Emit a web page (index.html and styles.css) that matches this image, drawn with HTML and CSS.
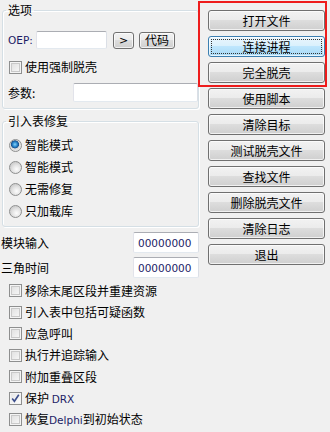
FILE: index.html
```html
<!DOCTYPE html>
<html>
<head>
<meta charset="utf-8">
<link rel="stylesheet" href="styles.css">
</head>
<body>
<div class="window">
  <div class="left">
    <fieldset class="group g1">
      <legend>选项</legend>
      <div class="row r-oep">
        <span class="latin lbl-oep">OEP:</span>
        <span class="edit e-oep"></span>
        <span class="btn b-arrow">&gt;</span>
        <span class="btn b-code">代码</span>
      </div>
      <div class="row r-force"><span class="cb"></span><span class="ctext">使用强制脱壳</span></div>
      <div class="row r-param">
        <span class="lbl-param">参数:</span>
        <span class="edit e-param"></span>
      </div>
    </fieldset>
    <fieldset class="group g2">
      <legend>引入表修复</legend>
      <div class="radio-row"><span class="rb on"></span><span class="ctext">智能模式</span></div>
      <div class="radio-row"><span class="rb"></span><span class="ctext">智能模式</span></div>
      <div class="radio-row"><span class="rb"></span><span class="ctext">无需修复</span></div>
      <div class="radio-row"><span class="rb"></span><span class="ctext">只加载库</span></div>
    </fieldset>
    <div class="val-row"><span class="vlabel">模块输入</span><span class="edit e-val latin">00000000</span></div>
    <div class="val-row"><span class="vlabel">三角时间</span><span class="edit e-val latin">00000000</span></div>
    <div class="checks">
      <div class="check-row"><span class="cb"></span><span class="ctext">移除末尾区段并重建资源</span></div>
      <div class="check-row"><span class="cb"></span><span class="ctext">引入表中包括可疑函数</span></div>
      <div class="check-row"><span class="cb"></span><span class="ctext">应急呼叫</span></div>
      <div class="check-row"><span class="cb"></span><span class="ctext">执行并追踪输入</span></div>
      <div class="check-row"><span class="cb"></span><span class="ctext">附加重叠区段</span></div>
      <div class="check-row"><span class="cb checked"><svg viewBox="0 0 11 11" width="11" height="11"><path d="M2.2 5.6 L4.4 8.3 L8.8 1.8" fill="none" stroke="#3d4f8c" stroke-width="1.6"/></svg></span><span class="ctext">保护 <span class="latin">DRX</span></span></div>
      <div class="check-row"><span class="cb"></span><span class="ctext">恢复<span class="latin">Delphi</span>到初始状态</span></div>
    </div>
  </div>
  <div class="right">
    <div class="btn wide">打开文件</div>
    <div class="btn wide focus"><span class="focus-rect">连接进程</span></div>
    <div class="btn wide">完全脱壳</div>
    <div class="btn wide">使用脚本</div>
    <div class="btn wide">清除目标</div>
    <div class="btn wide">测试脱壳文件</div>
    <div class="btn wide">查找文件</div>
    <div class="btn wide">删除脱壳文件</div>
    <div class="btn wide">清除日志</div>
    <div class="btn wide">退出</div>
  </div>
  <div class="redbox"></div>
</div>
</body>
</html>
```
FILE: styles.css
```css
* { box-sizing: border-box; }
html, body { margin: 0; padding: 0; }
body {
  width: 330px;
  height: 432px;
  background: #f0f0f0;
  font-family: "Noto Sans CJK SC", "DejaVu Sans", sans-serif;
  font-size: 12px;
  color: #000;
  overflow: hidden;
}
.window {
  position: relative;
  display: flex;
  width: 330px;
  height: 432px;
}
.left {
  width: 199px;
  display: flex;
  flex-direction: column;
}
.latin {
  font-family: "DejaVu Sans", "Liberation Sans", sans-serif;
  font-size: 10.5px;
  color: #1c1c66;
}
.group {
  margin: 0 0 0 2px;
  width: 197px;
  border: 1px solid #d5dfe5;
  border-radius: 3px;
  box-shadow: inset 1px 1px 0 #fff, 1px 1px 0 #fff;
  padding: 0;
  min-width: 0;
}
.group legend {
  margin-left: 3px;
  padding: 0 2px;
  height: 14px;
  line-height: 14px;
  font-size: 12px;
}
.g1 { margin-top: 3px; padding: 14px 0 6px 0; }
.g2 { margin-top: 5px; padding: 6px 0 4px 0; }

.row { display: flex; align-items: center; }
.r-oep { height: 18px; padding-left: 5px; }
.lbl-oep { width: 28px; }
.edit {
  display: flex;
  align-items: center;
  background: #fff;
  border: 1px solid;
  border-color: #abadb3 #dbdfe6 #e3e9ef #e2e3ea;
  border-radius: 2px;
}
.e-oep { width: 71px; height: 18px; }
.btn {
  display: flex;
  align-items: center;
  justify-content: center;
  border: 1px solid #707070;
  border-radius: 3px;
  background: linear-gradient(#f2f2f2 0%, #ebebeb 49%, #dddddd 50%, #cfcfcf 100%);
  box-shadow: inset 0 0 0 1px rgba(255,255,255,0.7);
  line-height: 1;
}
.b-arrow { width: 21px; height: 17px; margin-left: 6px; font-family: "DejaVu Sans", sans-serif; font-size: 11px; }
.b-code { width: 36px; height: 17px; margin-left: 5px; }
.r-force { height: 18px; margin-top: 9px; padding-left: 6px; }
.r-param { height: 19px; margin-top: 7px; padding-left: 5px; }
.lbl-param { width: 65px; }
.e-param { width: 125px; height: 19px; }

.cb {
  flex: none;
  width: 13px;
  height: 13px;
  border: 1px solid #8e8f8f;
  background: linear-gradient(135deg, #dcdcdc, #fbfbfb);
  box-shadow: inset 0 0 0 1px #f4f4f4, inset 0 0 0 2px #c9c9c9;
  display: flex;
  align-items: center;
  justify-content: center;
}
.cb.checked { background: linear-gradient(135deg, #e6e6e6, #fdfdfd); box-shadow: inset 0 0 0 1px #f4f4f4; }
.cb svg { display: block; }
.ctext { margin-left: 3px; line-height: 14px; white-space: nowrap; }

.radio-row { height: 22px; display: flex; align-items: center; padding-left: 6px; }
.rb {
  flex: none;
  width: 13px;
  height: 13px;
  border-radius: 50%;
  border: 1px solid #8e8f8f;
  background: radial-gradient(circle at 60% 65%, #fdfdfd 0%, #e2e2e2 45%, #cfcfcf 70%, #f2f2f2 100%);
}
.rb.on {
  background: radial-gradient(circle at 45% 40%, #8ad2f7 0%, #2b8ad0 25%, #1a4f8a 42%, #d8d8d8 48%, #f6f6f6 100%);
}

.val-row { height: 25px; display: flex; align-items: center; padding-left: 1px; }
.val-row:first-of-type { margin-top: 3px; }
.vlabel { width: 132px; }
.e-val { width: 66px; height: 21px; padding-left: 4px; font-size: 10.5px; }
.checks { display: flex; flex-direction: column; margin-top: 0; }
.check-row { height: 21.5px; display: flex; align-items: center; padding-left: 9px; }
.check-row .latin { font-size: 10.5px; }

.right {
  display: flex;
  flex-direction: column;
  gap: 5px;
  padding-top: 10px;
  margin-left: 9px;
}
.btn.wide { width: 117px; height: 21px; }
.btn.focus {
  border-color: #3c7fb1;
  background: linear-gradient(#eaf6fd 0%, #d9f0fc 49%, #bee6fd 50%, #a7d9f5 100%);
  padding: 2px;
}
.focus-rect {
  flex: 1;
  align-self: stretch;
  display: flex;
  align-items: center;
  justify-content: center;
  outline: 1px dotted #333;
  outline-offset: -1px;
}
.redbox {
  position: absolute;
  left: 198px;
  top: 1px;
  width: 129px;
  height: 86px;
  border: 2px solid #ee1c1c;
  pointer-events: none;
}
```
